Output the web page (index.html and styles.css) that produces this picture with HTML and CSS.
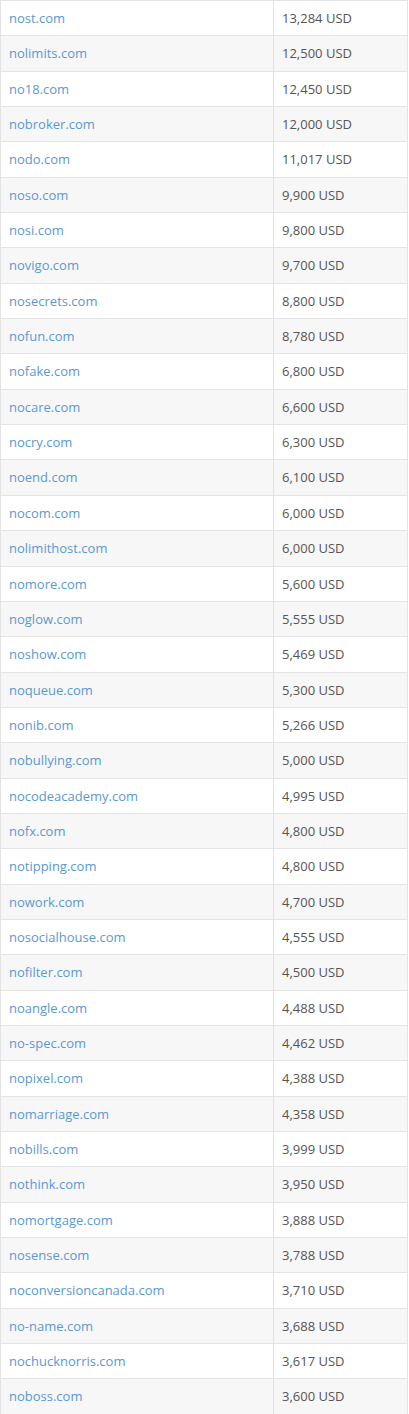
FILE: index.html
```html
<!DOCTYPE html>
<html>
<head>
<meta charset="utf-8">
<link rel="stylesheet" href="styles.css">
</head>
<body>
<table class="sales">
<tbody>
<tr><td class="dom"><a href="#">nost.com</a></td><td class="price">13,284 USD</td></tr>
<tr><td class="dom"><a href="#">nolimits.com</a></td><td class="price">12,500 USD</td></tr>
<tr><td class="dom"><a href="#">no18.com</a></td><td class="price">12,450 USD</td></tr>
<tr><td class="dom"><a href="#">nobroker.com</a></td><td class="price">12,000 USD</td></tr>
<tr><td class="dom"><a href="#">nodo.com</a></td><td class="price">11,017 USD</td></tr>
<tr><td class="dom"><a href="#">noso.com</a></td><td class="price">9,900 USD</td></tr>
<tr><td class="dom"><a href="#">nosi.com</a></td><td class="price">9,800 USD</td></tr>
<tr><td class="dom"><a href="#">novigo.com</a></td><td class="price">9,700 USD</td></tr>
<tr><td class="dom"><a href="#">nosecrets.com</a></td><td class="price">8,800 USD</td></tr>
<tr><td class="dom"><a href="#">nofun.com</a></td><td class="price">8,780 USD</td></tr>
<tr><td class="dom"><a href="#">nofake.com</a></td><td class="price">6,800 USD</td></tr>
<tr><td class="dom"><a href="#">nocare.com</a></td><td class="price">6,600 USD</td></tr>
<tr><td class="dom"><a href="#">nocry.com</a></td><td class="price">6,300 USD</td></tr>
<tr><td class="dom"><a href="#">noend.com</a></td><td class="price">6,100 USD</td></tr>
<tr><td class="dom"><a href="#">nocom.com</a></td><td class="price">6,000 USD</td></tr>
<tr><td class="dom"><a href="#">nolimithost.com</a></td><td class="price">6,000 USD</td></tr>
<tr><td class="dom"><a href="#">nomore.com</a></td><td class="price">5,600 USD</td></tr>
<tr><td class="dom"><a href="#">noglow.com</a></td><td class="price">5,555 USD</td></tr>
<tr><td class="dom"><a href="#">noshow.com</a></td><td class="price">5,469 USD</td></tr>
<tr><td class="dom"><a href="#">noqueue.com</a></td><td class="price">5,300 USD</td></tr>
<tr><td class="dom"><a href="#">nonib.com</a></td><td class="price">5,266 USD</td></tr>
<tr><td class="dom"><a href="#">nobullying.com</a></td><td class="price">5,000 USD</td></tr>
<tr><td class="dom"><a href="#">nocodeacademy.com</a></td><td class="price">4,995 USD</td></tr>
<tr><td class="dom"><a href="#">nofx.com</a></td><td class="price">4,800 USD</td></tr>
<tr><td class="dom"><a href="#">notipping.com</a></td><td class="price">4,800 USD</td></tr>
<tr><td class="dom"><a href="#">nowork.com</a></td><td class="price">4,700 USD</td></tr>
<tr><td class="dom"><a href="#">nosocialhouse.com</a></td><td class="price">4,555 USD</td></tr>
<tr><td class="dom"><a href="#">nofilter.com</a></td><td class="price">4,500 USD</td></tr>
<tr><td class="dom"><a href="#">noangle.com</a></td><td class="price">4,488 USD</td></tr>
<tr><td class="dom"><a href="#">no-spec.com</a></td><td class="price">4,462 USD</td></tr>
<tr><td class="dom"><a href="#">nopixel.com</a></td><td class="price">4,388 USD</td></tr>
<tr><td class="dom"><a href="#">nomarriage.com</a></td><td class="price">4,358 USD</td></tr>
<tr><td class="dom"><a href="#">nobills.com</a></td><td class="price">3,999 USD</td></tr>
<tr><td class="dom"><a href="#">nothink.com</a></td><td class="price">3,950 USD</td></tr>
<tr><td class="dom"><a href="#">nomortgage.com</a></td><td class="price">3,888 USD</td></tr>
<tr><td class="dom"><a href="#">nosense.com</a></td><td class="price">3,788 USD</td></tr>
<tr><td class="dom"><a href="#">noconversioncanada.com</a></td><td class="price">3,710 USD</td></tr>
<tr><td class="dom"><a href="#">no-name.com</a></td><td class="price">3,688 USD</td></tr>
<tr><td class="dom"><a href="#">nochucknorris.com</a></td><td class="price">3,617 USD</td></tr>
<tr><td class="dom"><a href="#">noboss.com</a></td><td class="price">3,600 USD</td></tr>
</tbody>
</table>
</body>
</html>
```
FILE: styles.css
```css
html, body {
  margin: 0;
  padding: 0;
  background: #ffffff;
}
body {
  font-family: "Open Sans", "Liberation Sans", sans-serif;
  font-size: 13px;
  color: #555555;
}
.sales {
  width: 408px;
  border-collapse: collapse;
  table-layout: fixed;
}
.sales td {
  border: 1px solid #e3e3e3;
  padding: 8px 8px;
  line-height: 18.35px;
  height: 18.35px;
  vertical-align: middle;
  white-space: nowrap;
}
.sales tr:nth-child(even) td {
  background: #f7f7f7;
}
.sales .dom {
  width: 256px;
}
.sales .dom a {
  color: #5b98d2;
  text-decoration: none;
}
.sales .price {
  color: #555555;
}
```
